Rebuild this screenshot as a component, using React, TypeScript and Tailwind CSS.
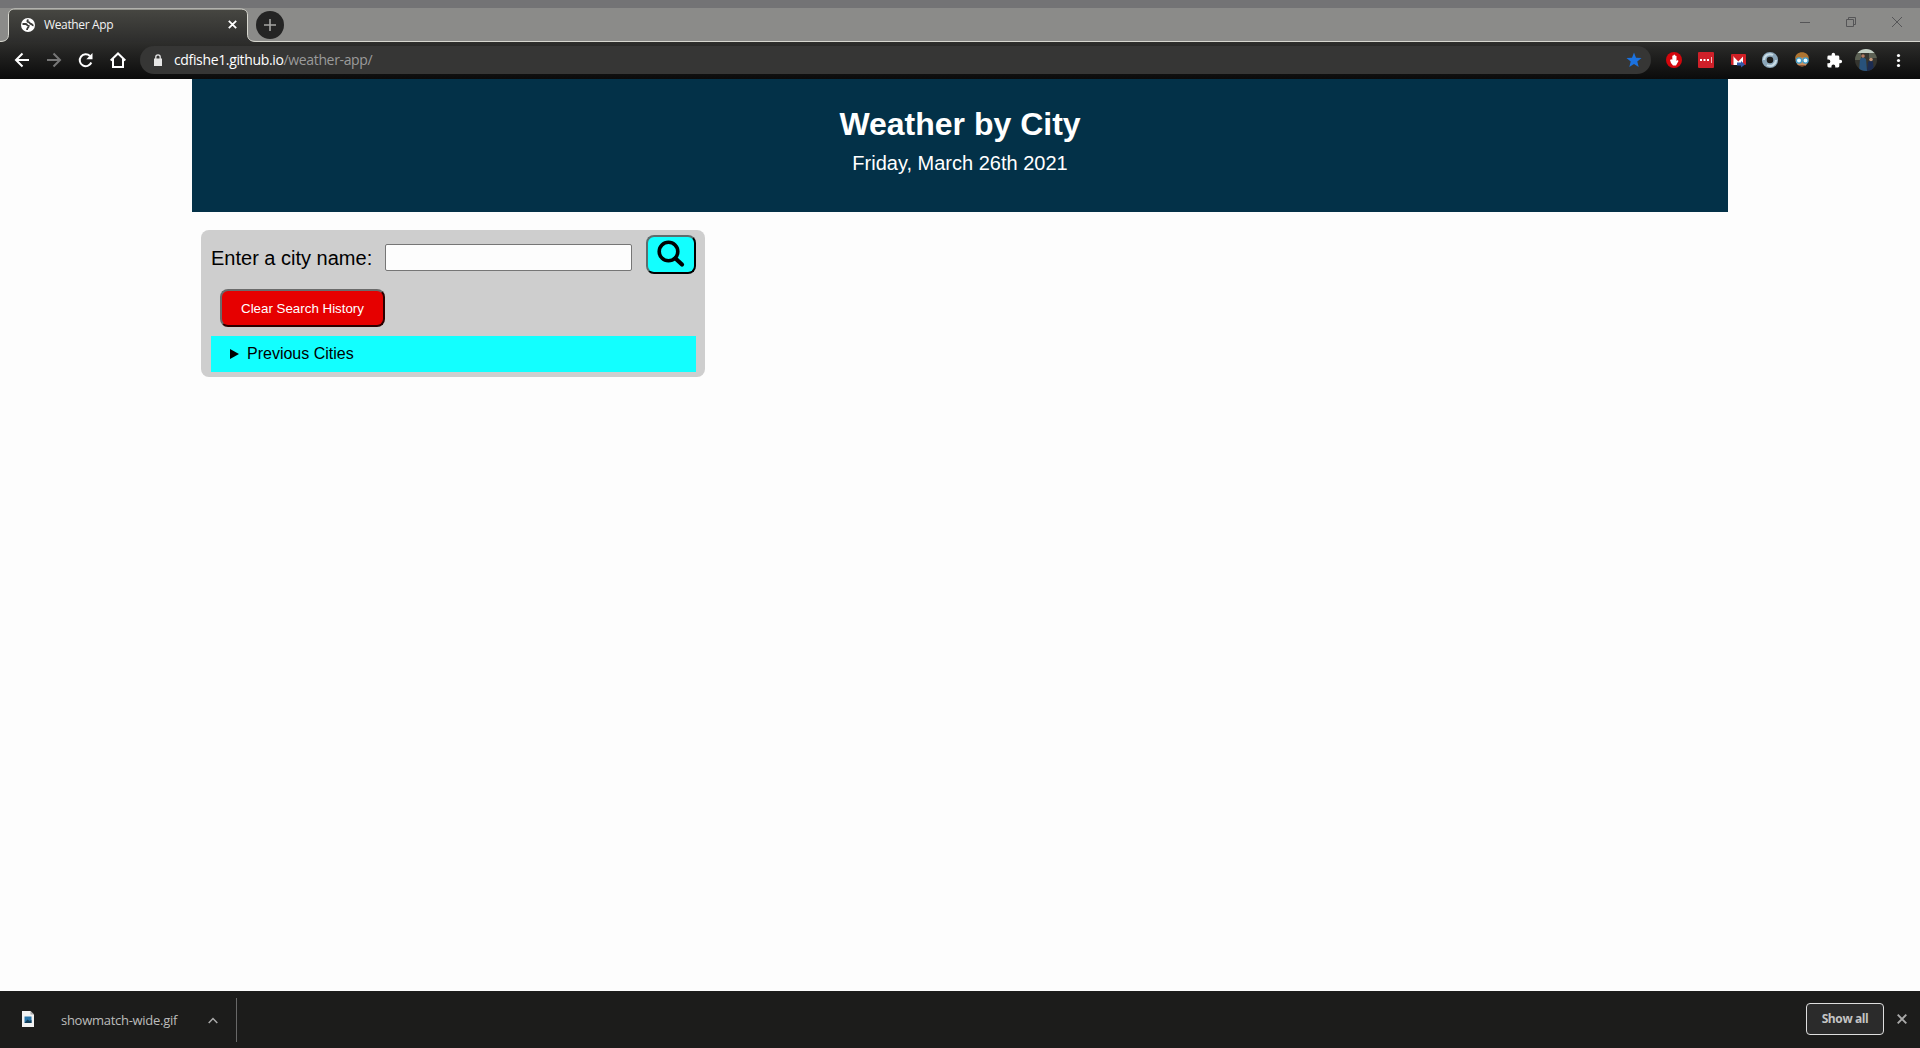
import React from "react";

const ui = "font-['Open_Sans',sans-serif]";

function TabStrip() {
  return (
    <div className="h-[42px] bg-[#8b8b89] border-b border-[#d8d8d0] flex items-stretch relative">
      <div className="absolute inset-x-0 top-0 h-2 bg-[#737375]" />
      <svg className="absolute left-0 top-0" width="260" height="42" viewBox="0 0 260 42">
        <defs>
          <linearGradient id="tab" x1="0" y1="0" x2="0" y2="1">
            <stop offset="0" stopColor="#474742" />
            <stop offset="1" stopColor="#2d2d2c" />
          </linearGradient>
        </defs>
        <path d="M0 41.500C6 41.500 8.500 39 8.500 34V15C8.500 11 11 9 15 9H240C245 9 247.500 11 247.500 15V34C247.500 39 250 41.500 256 41.500V42H0Z" fill="url(#tab)" />
        <path d="M0 41.500C6 41.500 8.500 39 8.500 34V15C8.500 11 11 9 15 9H240C245 9 247.500 11 247.500 15V34C247.500 39 250 41.500 256 41.500" fill="none" stroke="#d8d8d0" />
      </svg>
      <div className="relative flex w-[248px] items-center pt-2 pl-[21px]">
        <svg width="14" height="14" viewBox="0 0 14 14">
          <circle cx="7" cy="7" r="7" fill="#fff" />
          <path d="M1.500 6h3c1.800 0 1.500 2 3.200 2 0 1.800-1.700 1.500-1.700 4M7.500 1.800C5.800 2.200 6 4 7.600 4.200S8.500 6 10 6s1 1.500 2.500 1.200" stroke="#3b3b39" strokeWidth="1.800" fill="none" />
        </svg>
        <span className={`${ui} ml-[9px] text-[12px] leading-4 text-[#f2f2f2] tracking-[-0.35px]`}>Weather App</span>
        <svg className="ml-auto mr-[11px]" width="9" height="9" viewBox="0 0 9 9"><path d="M.8.8l7.400 7.400M8.200.8L.8 8.200" stroke="#fff" strokeWidth="1.800" /></svg>
      </div>
      <div className="relative ml-2 mt-[11px] flex size-7 items-center justify-center rounded-full bg-[#242424]">
        <svg width="12" height="12" viewBox="0 0 12 12"><path d="M6 0v12M0 6h12" stroke="#a5a5a3" strokeWidth="1.600" /></svg>
      </div>
      <svg className="relative ml-auto mr-[16px] mt-[16px]" width="104" height="12" viewBox="0 0 104 12" fill="none" stroke="#555557">
        <path d="M0 6.500h10M46.500 3.500h7v7h-7zM48.500 3.500v-2h7v7h-2M92 1l10 10M102 1L92 11" />
      </svg>
    </div>
  );
}

function Extensions() {
  return (
    <svg width="269" height="28" viewBox="1651 46 269 28">
      <circle cx="1674" cy="60" r="8" fill="#d4060c" />
      <path d="M1670 60l1 3 2 2.500h3l2.500-4.500-.8-1-1.200 1v-5l-1.200-.3-.3-.9h-1.200l-.3.700-1.200.3v4l-1-.5z" fill="#fff" />
      <rect x="1698" y="52" width="16" height="16" rx="1" fill="#cf2029" />
      <path d="M1700 60h2m1.500 0h2m1.500 0h2" stroke="#fff" strokeWidth="2.200" /><path d="M1711.500 57v6" stroke="#f3b5b8" />
      <rect x="1731" y="54" width="15" height="11" rx="1" fill="#d12026" />
      <path d="M1733.500 65v-9l4.800 4.500 4.700-4.500v9z" fill="#fff" />
      <path d="M1734 56l4.300 4.500 4.200-4.500" fill="none" stroke="#d12026" strokeWidth="1.500" />
      <path d="M1737 62.500h4v-1.500l4 3.500-4 3v-2h-4z" fill="#3158a8" />
      <circle cx="1770" cy="60" r="5.700" fill="none" stroke="#8aa5b8" strokeWidth="4.800" />
      <path d="M1764 60a6 6 0 0 1 9-5M1776 60a6 6 0 0 1-9 5" fill="none" stroke="#c9dce5" strokeWidth="2" />
      <circle cx="1802" cy="60" r="6.500" fill="#c98f5e" />
      <path d="M1795.200 59c-1-9 14.600-9 13.600 0l-2-1.500h-9z" fill="#ad7431" />
      <g fill="#e9faff" stroke="#3a9bcb" strokeWidth="1.200"><circle cx="1799" cy="60.500" r="2.600" /><circle cx="1805.500" cy="60.500" r="2.600" /></g>
      <path d="M1799 65.500h7" stroke="#895337" />
      <g transform="translate(1826 52) scale(.7)"><path d="M20.500 11H19V7a2 2 0 0 0-2-2h-4V3.500a2.500 2.500 0 0 0-5 0V5H4a2 2 0 0 0-2 2v3.800h1.500a2.700 2.700 0 0 1 0 5.400H2V20a2 2 0 0 0 2 2h3.800v-1.500a2.700 2.700 0 0 1 5.400 0V22H17a2 2 0 0 0 2-2v-4h1.500a2.500 2.500 0 0 0 0-5z" fill="#fff" /></g>
      <clipPath id="avatar"><circle cx="1866" cy="60" r="11" /></clipPath>
      <g clipPath="url(#avatar)">
        <path d="M1855 49h22v22h-22z" fill="#35352f" /><path d="M1855 49h22v4h-22z" fill="#c3cfc4" />
        <path d="M1855 53h6v7h-6zM1869 53h8v5h-8z" fill="#5c6154" />
        <path d="M1859 71l1-12 3-2 3 2 1 12z" fill="#28527b" /><circle cx="1863" cy="56" r="1.800" fill="#b07a62" />
        <path d="M1867 71l1-9 3-2 2 2 1 9z" fill="#1c2c50" /><circle cx="1871" cy="59.500" r="1.800" fill="#c19678" />
      </g>
      <g fill="#fff"><circle cx="1898.500" cy="55.500" r="1.600" /><circle cx="1898.500" cy="60.500" r="1.600" /><circle cx="1898.500" cy="65.500" r="1.600" /></g>
    </svg>
  );
}

function Toolbar() {
  return (
    <div className="flex h-[37px] items-center bg-linear-to-b from-[#2e2e2c] to-[#0b0b0b] pb-px">
      <svg width="126" height="24" viewBox="0 48 126 24" className="shrink-0" fill="none" stroke="#fff" strokeWidth="2">
        <path d="M29 60H16.500M22.500 53.500L16 60l6.500 6.500" />
        <path d="M47 60h12.500M53.500 53.500L60 60l-6.500 6.500" stroke="#777" />
        <path d="M91.300 62.500a6 6 0 1 1-1.300-6.500" /><path d="M92.500 53v6.200h-6.200z" fill="#fff" stroke="none" />
        <path d="M110.700 60.500l7.300-7 7.300 7M113 59v8h10v-8" />
      </svg>
      <div className="ml-[14px] flex h-7 w-[1512px] items-center rounded-full bg-[#363635] pl-[14px] pr-[9px]">
        <svg className="-mt-px" width="8" height="12" viewBox="0 0 8 12"><path d="M0 4.500h8V12H0z" fill="#e6e6e6" /><path d="M1.800 5V3a2.200 2.200 0 0 1 4.400 0v2" stroke="#e6e6e6" strokeWidth="1.300" fill="none" /></svg>
        <span className={`${ui} ml-[12px] text-[14px] leading-5 tracking-[-0.35px] text-[#fff]`}>cdfishe1.github.io<span className="text-[#9b9b9b]">/weather-app/</span></span>
        <svg className="ml-auto" width="16" height="16" viewBox="0 0 16 16"><path d="M8 .5l2 5.200 5.500.3-4.200 3.500 1.400 5.500L8 12l-4.700 3 1.400-5.500L.5 6 6 5.700z" fill="#1b72e0" /></svg>
      </div>
      <div className="ml-auto">
        <Extensions />
      </div>
    </div>
  );
}

function WeatherPage() {
  return (
    <main className="h-[912px] bg-[#fdfdfd] px-48 font-['Liberation_Sans',Arial,sans-serif]">
      <header className="h-[133px] bg-[#033148] pt-[27px] text-center text-white">
        <h1 className="text-[32px] font-bold leading-[37px]">Weather by City</h1>
        <p className="mt-[9px] text-[20px] leading-[23px]">Friday, March 26th 2021</p>
      </header>
      <section className="ml-[9px] mt-[18px] h-[147px] w-[504px] rounded-lg bg-[#cecece] pl-[10px] pr-[9px] pt-[5px] text-black">
        <div className="flex">
          <label htmlFor="city" className="mt-[12px] w-[174px] whitespace-nowrap text-[20px] leading-[23px]">Enter a city name:</label>
          <input id="city" className="mt-[9px] h-[27px] w-[247px] rounded-[2px] border border-[#767676] bg-[#fdfdfd]" />
          <button aria-label="Search" className="ml-auto flex h-[39px] w-[50px] items-start justify-center rounded-lg border-2 border-t-[#5d6d6d] border-l-[#5d6d6d] border-r-black border-b-black bg-[#12ffff] pt-[3px]">
            <svg width="28" height="28" viewBox="0 0 28 28" fill="none" stroke="#000"><circle cx="11.500" cy="11.500" r="9.300" strokeWidth="3.600" /><path d="M18.500 18.500l6.500 6" strokeWidth="4.200" strokeLinecap="round" /></svg>
          </button>
        </div>
        <button className="ml-[9px] mt-[15px] block h-[38px] w-[165px] rounded-lg border-2 border-t-[#6b6b6b] border-l-[#6b6b6b] border-r-[#2b0000] border-b-[#2b0000] bg-[#e60000] pt-px text-[13.333px] text-white">Clear Search History</button>
        <div className="mt-[9px] flex h-9 items-center bg-[#12ffff] pl-[19px] text-[16px]">
          <svg width="9" height="10" viewBox="0 0 9 10"><path d="M0 0l9 5-9 5z" /></svg>
          <span className="ml-[8px]">Previous Cities</span>
        </div>
      </section>
    </main>
  );
}

function DownloadBar() {
  return (
    <footer className={`${ui} flex h-[57px] bg-[#1c1c1b]`}>
      <div className="mt-[7px] flex h-11 w-[237px] items-center border-r border-[#686868] pl-[22px]">
        <svg className="-mt-[3px]" width="12" height="16" viewBox="0 0 12 16"><path d="M0 0h8.500L12 3.500V16H0z" fill="#f2f2f2" /><path d="M8.500 0v3.500H12" fill="#aaa" /><path d="M2.500 5.500h7V12h-7z" fill="#2874a8" /><path d="M2.500 12l3-3.500L7.500 10l2-1v3z" fill="#123d58" /></svg>
        <span className="ml-[27px] pt-px text-[13px] tracking-[-0.28px] text-[#bcbcbc]">showmatch-wide.gif</span>
        <svg className="ml-auto mr-[18px]" width="10" height="7" viewBox="0 0 10 7"><path d="M.7 6L5 1.500 9.300 6" fill="none" stroke="#aaa" strokeWidth="1.500" /></svg>
      </div>
      <button className="ml-auto mt-[12px] h-8 w-[78px] rounded border border-[#dedede] bg-[#2b2b2b] text-[12px] font-bold tracking-[-0.4px] text-[#c4c4c4]">Show all</button>
      <svg className="ml-[13px] mr-[13px] mt-[23px]" width="10" height="10" viewBox="0 0 10 10"><path d="M.7.7l8.600 8.600M9.300.7L.7 9.300" stroke="#aaa" strokeWidth="1.900" /></svg>
    </footer>
  );
}

export default function App() {
  return (
    <div className="flex h-[1048px] w-[1920px] flex-col overflow-hidden bg-[#fdfdfd]">
      <TabStrip />
      <Toolbar />
      <WeatherPage />
      <DownloadBar />
    </div>
  );
}
